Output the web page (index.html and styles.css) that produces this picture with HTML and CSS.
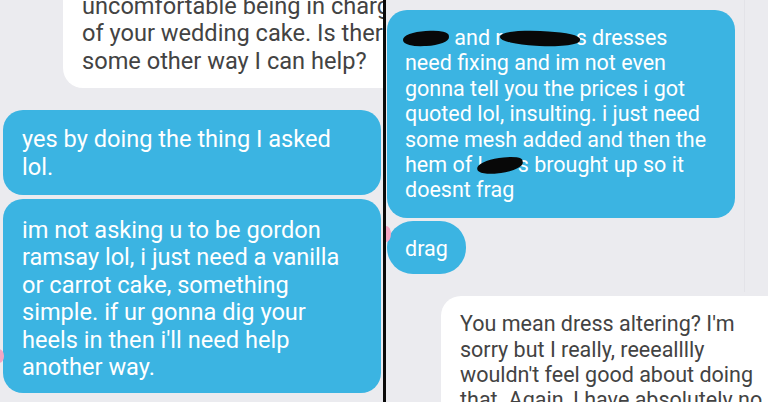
FILE: index.html
```html
<!DOCTYPE html>
<html lang="en">
<head>
    <meta charset="UTF-8">
    <meta name="viewport" content="width=device-width, initial-scale=1.0">
    <title>Wedding cake chat</title>
    <link rel="stylesheet" href="styles.css">
</head>
<body>
    <div class="collage">
        <!-- Left screenshot -->
        <div class="panel panel-left">
            <div class="bubble them top-cut">
                uncomfortable being in charge<br>
                of your wedding cake. Is there<br>
                some other way I can help?
            </div>
            <div class="bubble me first">
                yes by doing the thing I asked<br>
                lol.
            </div>
            <div class="bubble me second">
                im not asking u to be gordon<br>
                ramsay lol, i just need a vanilla<br>
                or carrot cake, something<br>
                simple. if ur gonna dig your<br>
                heels in then i'll need help<br>
                another way.
            </div>
            <span class="pink-dot dot-left"></span>
        </div>

        <div class="divider"></div>

        <!-- Right screenshot -->
        <div class="panel panel-right">
            <div class="bubble me long">
                <span class="redact r1"></span> and r<span class="redact r2"></span>s dresses<br>
                need fixing and im not even<br>
                gonna tell you the prices i got<br>
                quoted lol, insulting. i just need<br>
                some mesh added and then the<br>
                hem of l<span class="redact r3"></span>s brought up so it<br>
                doesnt frag
            </div>
            <div class="bubble me short">drag</div>
            <div class="bubble them bottom-cut">
                You mean dress altering? I'm<br>
                sorry but I really, reeealllly<br>
                wouldn't feel good about doing<br>
                that. Again, I have absolutely no
            </div>
            <span class="pink-dot dot-right"></span>
            <span class="scroll-line"></span>
        </div>
    </div>
</body>
</html>
```

FILE: styles.css
```css
* {
    margin: 0;
    padding: 0;
    box-sizing: border-box;
}

body {
    font-family: Roboto, 'Liberation Sans', sans-serif;
    background: #ebebef;
    width: 768px;
    height: 402px;
    overflow: hidden;
}

.collage {
    display: flex;
    height: 402px;
}

.panel {
    position: relative;
    overflow: hidden;
    background: #ebebef;
    display: flex;
    flex-direction: column;
    align-items: flex-start;
}

.panel-left {
    width: 383px;
    flex-shrink: 0;
}

.panel-right {
    flex: 1;
}

.divider {
    width: 3px;
    flex-shrink: 0;
    background: #0a0a0a;
}

.bubble {
    border-radius: 20px;
    white-space: nowrap;
    flex-shrink: 0;
}

.me {
    background: #3bb4e2;
    color: #fff;
}

.them {
    background: #fff;
    color: #434343;
}

/* left panel */
.panel-left .bubble {
    font-size: 23.6px;
    line-height: 27.4px;
}

.panel-left .me {
    width: 378px;
    margin-left: 3px;
    padding: 16px 19px 14px;
    margin-bottom: 4px;
}

.panel-left .second {
    padding: 18px 19px 12px;
}

.top-cut {
    margin-top: -19px;
    margin-left: 63px;
    width: 380px;
    padding: 12px 19px 13px;
    border-radius: 0 0 0 20px;
    margin-bottom: 22px;
}

/* right panel */
.panel-right .bubble {
    font-size: 21.5px;
    line-height: 25.4px;
}

.long {
    margin-top: 10px;
    margin-left: 1px;
    width: 348px;
    padding: 15px 18px 15px;
}

.short {
    margin-top: 3px;
    margin-left: 1px;
    padding: 15px 18px 13px;
    border-radius: 26px;
}

.bottom-cut {
    margin-top: 22px;
    margin-left: 55px;
    width: 360px;
    padding: 15px 19px;
    border-radius: 20px 0 0 0;
}

.redact {
    display: inline-block;
    background: #080808;
    border-radius: 50% 40% 50% 45%;
    vertical-align: -1px;
    height: 15px;
}

.r1 {
    width: 46px;
    margin-left: -2px;
    transform: rotate(-3deg);
}

.r2 {
    width: 80px;
    margin-left: -3px;
    margin-right: -4px;
    transform: rotate(3deg);
}

.r3 {
    width: 46px;
    margin-left: -6px;
    margin-right: -5px;
    transform: rotate(-8deg);
}

.pink-dot {
    position: absolute;
    background: #f4a6c4;
    border-radius: 50%;
}

.dot-left {
    left: -6px;
    top: 349px;
    width: 10px;
    height: 14px;
}

.dot-right {
    left: -5px;
    top: 226px;
    width: 10px;
    height: 16px;
}

.scroll-line {
    position: absolute;
    left: 358px;
    top: 0;
    width: 1px;
    height: 292px;
    background: #e3e3e8;
}
```
